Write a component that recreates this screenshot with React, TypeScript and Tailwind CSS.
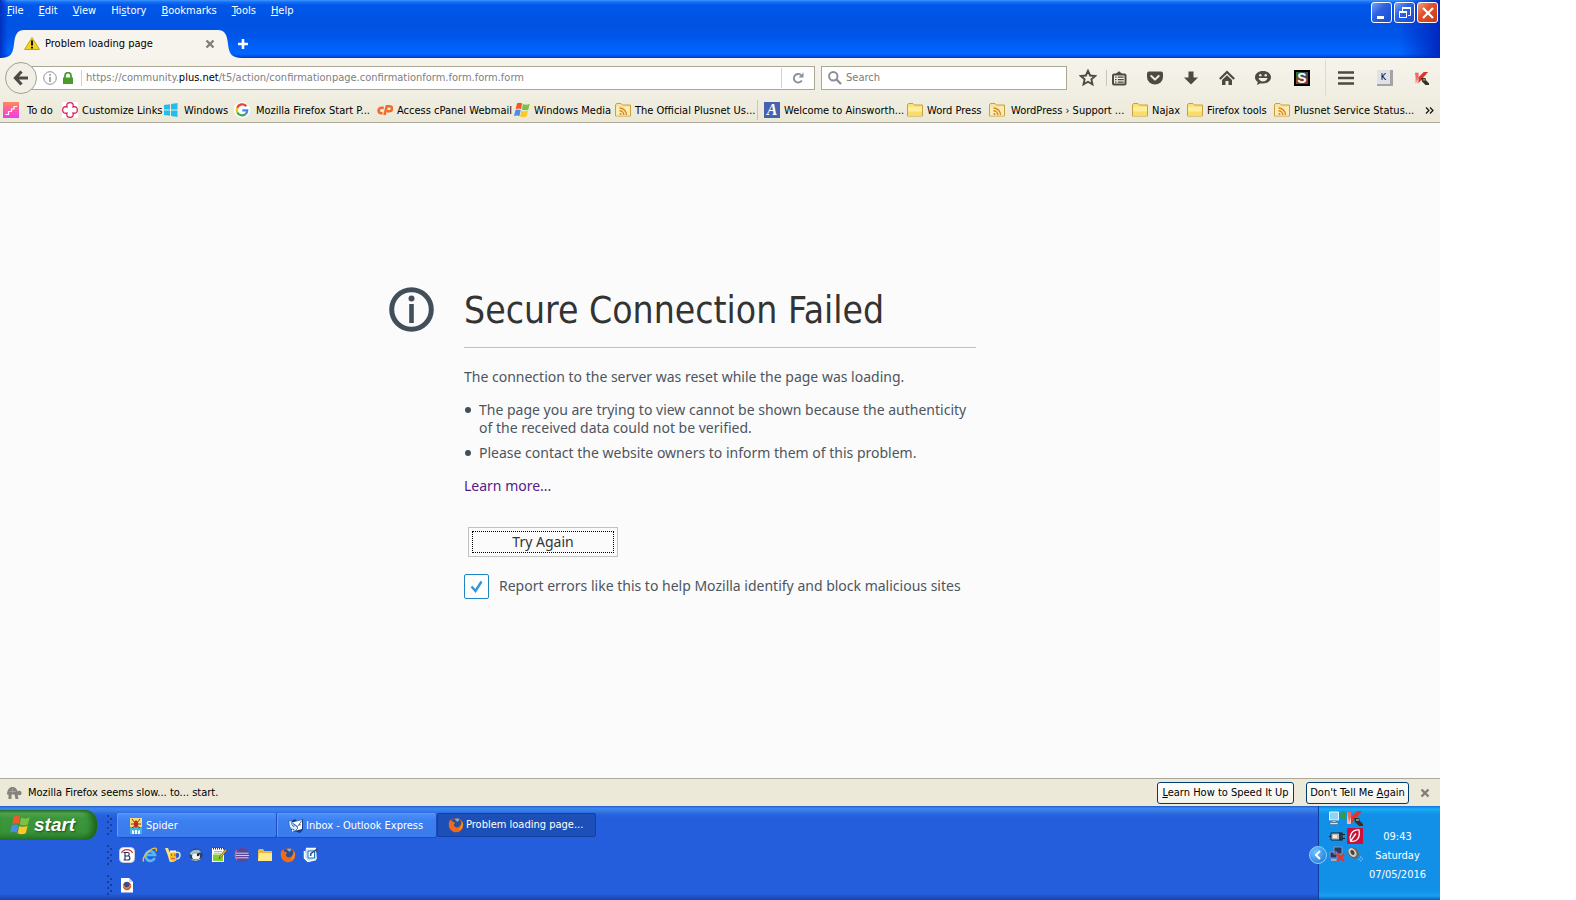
import React from "react";

type Kids = { children?: React.ReactNode };

function Svg({ children, size = 16, box = 16, className = "" }: Kids & { size?: number; box?: number; className?: string }) {
  return (
    <svg width={size} height={size} viewBox={`0 0 ${box} ${box}`} fill="none" aria-hidden="true" className={`shrink-0 ${className}`}>
      {children}
    </svg>
  );
}

/* ---------- Bookmark icons ---------- */

const TodoIcon = () => (
  <Svg>
    <defs>
      <linearGradient id="todo" x1="0" y1="0" x2="0" y2="1">
        <stop offset="0" stopColor="#ff8a5c" />
        <stop offset="0.5" stopColor="#ff5aa8" />
        <stop offset="1" stopColor="#f03cf0" />
      </linearGradient>
    </defs>
    <path d="M0 0h16v16H0z" fill="url(#todo)" />
    <path d="M2.500 12.500h3v-3h3v-2.500h2.500V4.500h3" stroke="#fff" strokeWidth="1.200" />
  </Svg>
);

const LinksIcon = () => (
  <Svg>
    <path d="M0 0h16v16H0z" fill="#fff" />
    <path d="M5 5C4 1.500 6 .7 8 .7s4 .8 3 4.300c3.500-1 4.300 1 4.300 3s-.8 4-4.300 3c1 3.500-1 4.300-3 4.300s-4-.8-3-4.300C1.500 12 .7 10 .7 8s.8-4 4.300-3z" stroke="#d0215f" strokeWidth="1.300" />
  </Svg>
);

const Win8Icon = () => (
  <Svg>
    <path d="M0 3 6 2.200v5.300H0zM7 2 13.500 1v6.500H7zM0 8.500h6v5.300L0 13zM7 8.500h6.500V15L7 14z" fill="#22bdf0" />
  </Svg>
);

const GoogleIcon = () => (
  <Svg>
    <circle cx="8" cy="8" r="8" fill="#fff" />
    <path d="M12.300 4.200A5.300 5.300 0 0 0 3.300 5.800" stroke="#ea4335" strokeWidth="2.200" />
    <path d="M3.300 5.800a5.300 5.300 0 0 0 0 4.600" stroke="#fbbc05" strokeWidth="2.200" />
    <path d="M3.300 10.400a5.300 5.300 0 0 0 8.200 1.700" stroke="#34a853" strokeWidth="2.200" />
    <path d="M11.500 12.100A5 5 0 0 0 13.300 8.300H8.300" stroke="#4285f4" strokeWidth="2.200" />
  </Svg>
);

const CpanelIcon = () => (
  <Svg>
    <path d="M6.800 5.800H4.300a2.700 2.700 0 0 0 0 5.400h1.300" stroke="#f4692d" strokeWidth="2.600" />
    <path d="M7.500 13 9.800 4.200h2.700a2.400 2.400 0 0 1 0 5H10" stroke="#f4692d" strokeWidth="2.600" />
  </Svg>
);

const FlagIcon = ({ size = 16 }: { size?: number }) => (
  <Svg size={size}>
    <path d="M3 1.300C5 .2 6.800.6 8.200 1.500L6.900 7.200C5.200 6.300 3.600 6.300 1.600 7.400z" fill="#ee5a2a" />
    <path d="M9 2c2 1 4.200 1 6.800-.3L14.300 7.500c-2.200 1.200-4.400 1-6.600.1z" fill="#7cc142" />
    <path d="M1.400 8.300c2-1 3.700-1 5.300 0l-1.400 5.900C3.700 13.200 2 13.200 0 14.300z" fill="#4a8fe6" />
    <path d="M7.400 8.700c2.200 1 4.400 1 6.700-.1l-1.500 6c-2.200 1-4.400 1-6.500 0z" fill="#fbc72c" />
  </Svg>
);

const FolderIcon = ({ feed = false }: { feed?: boolean }) => (
  <Svg>
    <path d="M.5 14V3l1-1.500H6L7.500 3h8v11z" fill={feed ? "#f8e3a0" : "#fbe27c"} stroke="#c9a03c" />
    <path d="M1 5h14v8.500H1z" fill={feed ? "#fbecb8" : "#fdee9c"} />
    {feed ? (
      <>
        <circle cx="5.500" cy="12" r="1.100" fill="#d98a1c" />
        <path d="M4.500 8.700a4.300 4.300 0 0 1 4.300 4.200M4.500 5.900a7 7 0 0 1 7 7" stroke="#d98a1c" strokeWidth="1.500" />
      </>
    ) : (
      <path d="M1 9.500h14v4H1z" fill="#f9dc6c" />
    )}
  </Svg>
);

const AIcon = () => (
  <span className="flex size-4 shrink-0 items-center justify-center bg-[#4563ae] font-['Liberation_Serif',serif] text-[16px] leading-4 font-bold text-white italic">A</span>
);

/* ---------- Toolbar icons ---------- */

const ink = "#4b4a43";

const StarIcon = () => (
  <Svg size={18} box={18}>
    <path d="m9 1.800 2.100 4.700 5.100.5-3.800 3.400 1.100 5L9 12.800l-4.500 2.600 1.100-5L1.800 7l5.100-.5z" stroke={ink} strokeWidth="1.900" />
  </Svg>
);
const ListIcon = () => (
  <Svg>
    <rect x="2" y="4.500" width="12.500" height="10" rx="1" stroke={ink} strokeWidth="2" />
    <path d="M4.500 4.500 6 2.500h.7L8 1l1.300 1.500h.7l1.500 2z" fill={ink} />
    <path d="M4 7.200h1.500M6.700 7.200h6M4 9.700h1.500M6.700 9.700h6M4 12.200h1.500M6.700 12.200h6" stroke={ink} strokeWidth="1.300" />
  </Svg>
);
const PocketIcon = () => (
  <Svg>
    <path d="M2 1.500h12Q16 1.500 16 3.500V7a8 7.500 0 0 1-16 0V3.500Q0 1.500 2 1.500z" fill={ink} />
    <path d="m4.300 6 3.700 3.600L11.700 6" stroke="#f1efe3" strokeWidth="2" strokeLinecap="round" strokeLinejoin="round" />
  </Svg>
);
const DownIcon = () => (
  <Svg>
    <path d="M5.500 1.500h5v6H15L8 14.500 1 7.500h4.500z" fill={ink} />
  </Svg>
);
const HomeIcon = () => (
  <Svg>
    <path d="m.8 9 7.200-7L15.200 9" stroke={ink} strokeWidth="2.200" />
    <path d="m8 5.200 5 4.800V15H9.500v-4h-3v4H3v-5z" fill={ink} />
  </Svg>
);
const ChatIcon = () => (
  <Svg>
    <path d="M8 1c4.500 0 8 2.700 8 6.300s-3.500 6.200-8 6.200c-.8 0-1.600-.1-2.300-.3L2 15l.8-3C1 10.900 0 9.200 0 7.300 0 3.700 3.500 1 8 1z" fill={ink} />
    <circle cx="5.300" cy="5.200" r="1.200" fill="#f1efe3" />
    <circle cx="10.700" cy="5.200" r="1.200" fill="#f1efe3" />
    <path d="M3.500 8h9c-.5 2.300-2.300 3.400-4.500 3.400S4 10.300 3.500 8z" fill="#f1efe3" />
  </Svg>
);
const StylishIcon = () => (
  <span className="flex size-4 items-center justify-center border-2 border-black bg-[conic-gradient(#3a4a5f_0_25%,#8c2f28_0_50%,#8a4a28_0_75%,#3c6630_0)] font-['Liberation_Sans',sans-serif] text-[14px] leading-none font-bold text-white">S</span>
);
const MenuIcon = () => (
  <Svg>
    <path d="M0 2.500h16M0 8h16M0 13.500h16" stroke={ink} strokeWidth="2.600" />
  </Svg>
);
const KeyIcon = () => (
  <span className="flex size-4 items-center justify-center border-r-3 border-b-2 border-[#a3a3a8] bg-[#e2e2e6] text-[9px] leading-none text-black">K</span>
);
const KasperskyIcon = ({ size = 14 }: { size?: number }) => (
  <Svg size={size}>
    <path d="M0 2h4v12H0z" fill="#f7b9b3" />
    <path d="M4 2v5l6-6h5L4 14z" fill="#e2342d" />
    <path d="M0 2h4v5L2 12z" fill="#ec6a62" />
    <path d="M7 8h5l1 3 3 3v2h-4l-4-4z" fill="#33312e" />
    <path d="M9 9h3v2H9z" fill="#8a8a86" />
  </Svg>
);

/* ---------- Desktop icons ---------- */

const FirefoxIcon = ({ size = 16 }: { size?: number }) => (
  <Svg size={size}>
    <circle cx="8" cy="8" r="7" fill="#e65a17" />
    <circle cx="8" cy="6.500" r="5.300" fill="#2a4f93" />
    <path d="M6.500 2c2-1 4-.6 5 .4L9.500 5z" fill="#6db7e8" />
    <path d="M1 5 2.500 2.500 4 4.500c1.500 0 2.500.6 3 1.500L5.800 7.500C6 10 8.500 11 10.500 10c2-1 3-3.500 2.800-6.500C16.500 7 15.500 12.500 11.500 14.500 6 17-.5 12.500 1 5z" fill="#ee6a1c" />
    <path d="M14 4.500c1.500 4-.5 7.500-3.500 9 3-2.500 4-5 3.500-9z" fill="#fdd03a" />
  </Svg>
);
const SpiderIcon = () => (
  <Svg>
    <path d="M2 0h12v16H2z" fill="#f5dc7a" />
    <path d="M2 9h12v7H2z" fill="#3fb4e4" />
    <path d="m4 1 3 4m5-4L9 5M3 6h10M4 10l4-3m4 3L8 7" stroke="#7c1c10" strokeWidth=".9" />
    <ellipse cx="8" cy="6" rx="2" ry="3.500" fill="#c22a1c" />
    <path d="M4 12v4h2v-3zm8 0v4h-2v-3zM7 12h2v4H7z" fill="#fff" />
  </Svg>
);
const OutlookIcon = () => (
  <Svg>
    <path d="m3 3 4-2 2 2 6-2v11l-3 3-9-3z" fill="#173f86" />
    <path d="m4 4.500 10-2.500v9l-10 2.500z" fill="#fff" />
    <path d="m4.500 5 5 3.500L14 2.500" stroke="#3b6fb0" />
    <path d="M1 2.500c-.5 6 1 9 5 9v2.500l4-4-4-4v2.500C4 8 3.500 6 4 3z" fill="#d8efff" stroke="#1d5fb3" strokeWidth=".8" />
    <path d="M11 6h1.500v1.500H11z" fill="#d33" />
  </Svg>
);
const BIcon = () => (
  <Svg>
    <rect x=".5" y=".5" width="15" height="15" rx="4" fill="#fff" stroke="#ccd" />
    <path d="M2.500 6c1.500-4.500 9.500-4.500 11 0" stroke="#d23b3b" strokeWidth="1.300" />
    <path d="M6 6v7M4.500 5.500h4c2.300 0 2.300 3.500 0 3.500H6.500h2.500c2.500 0 2.500 4 0 4H4.500" stroke="#222b55" strokeWidth="1.100" />
  </Svg>
);
const IeIcon = () => (
  <Svg>
    <path d="M12.700 11A4.800 4.800 0 1 1 13 8H5" stroke="#58b7f2" strokeWidth="2.700" />
    <path d="M2 14.500C-1.500 13 6 3 11.500 1.300c3-.8 3.500 1 2.500 3" stroke="#f5c52c" strokeWidth="1.300" />
  </Svg>
);
const PotIcon = () => (
  <Svg>
    <path d="M0 1h3l1.500 4h6l1 8q-3 3-7 1.500L3 9z" fill="#fbe08a" />
    <path d="M5 5h6v8q-3 2-6 0z" fill="#f3bd27" />
    <path d="M11 5.500q4-1 4 2.500T11.500 12" stroke="#e9e3c8" strokeWidth="1.500" />
    <path d="M6 7h1v2H6zm3.500 0h1v2h-1zM6.500 11h3v1h-3z" fill="#d0502a" />
    <path d="M5 3.500h6v2H5z" fill="#fff6cf" />
  </Svg>
);
const ThunderbirdIcon = () => (
  <Svg>
    <circle cx="8" cy="8" r="6.500" fill="#27445e" />
    <path d="M1.500 7C3 3 7 2 11 3l2.500 2.500-4 .5-5 2.500z" fill="#9bb9cf" />
    <ellipse cx="8" cy="9.500" rx="4" ry="3" fill="#f4f4f4" />
    <circle cx="10" cy="8" r="1.200" fill="#223" />
    <path d="M3.500 12.500q5 2.500 9-.5" stroke="#b9cbd8" />
  </Svg>
);
const NotepadIcon = () => (
  <Svg>
    <path d="M1 1h12v14H1z" fill="#fff" />
    <path d="M2 7.500h10v6.500H2z" fill="#7fd02a" />
    <path d="M2 1.500h11" stroke="#333" strokeDasharray="1 1" strokeWidth="2" />
    <path d="M3 4.500h8M3 6.300h7" stroke="#99a" strokeWidth=".8" />
    <path d="m8 12 1-3 5.500-7L16 3.200 10.500 10z" fill="#e9b934" stroke="#5a3b12" strokeWidth=".6" />
  </Svg>
);
const EclipseIcon = () => (
  <Svg>
    <circle cx="8" cy="8" r="7.200" fill="#5a4796" />
    <path d="M1.500 6.200h13M1 8.500h14M1.500 10.800h13" stroke="#d9cbe6" />
    <path d="M3 3.300A7 7 0 0 0 3 12.700" stroke="#c86a94" strokeWidth="1.300" />
  </Svg>
);
const YellowFolderIcon = () => (
  <Svg>
    <path d="M1 14V3.500L2 2h4l1.500 2H15v10z" fill="#e8b93c" />
    <path d="M1 14 2 6h13v8z" fill="#ffe98f" />
    <path d="M0 14.500h15.500" stroke="#7a5a12" />
  </Svg>
);
const DesktopIcon = () => (
  <Svg>
    <path d="M3 1h10l1 11-9 3-4-4z" fill="#bfe3fa" />
    <path d="M3 1.500h10M1.500 4v7L5 14.500l8-2" stroke="#fff" strokeWidth="1.500" />
    <path d="M5 4h6.500v7H5z" fill="#fff" stroke="#2a71b8" />
    <path d="m7.500 9 .5-2.500L14.500 2" stroke="#1d4d86" strokeWidth="1.500" />
    <path d="m12.500 3 3 1-2 1.500z" fill="#8a3b1a" />
  </Svg>
);
const DocFirefoxIcon = () => (
  <Svg>
    <path d="M2 1h8l4 4v10.500H2z" fill="#fff" />
    <path d="M10 1v4h4z" fill="#cfd6e2" />
    <circle cx="8" cy="9" r="4.200" fill="#e2581a" />
    <circle cx="7.800" cy="7.800" r="2.800" fill="#2c4f98" />
    <path d="M4.500 8c.5 4 5 4 7 0" stroke="#f7a52a" />
  </Svg>
);
const WifiIcon = () => (
  <Svg>
    <path d="M.5 2h9v8h-9z" fill="#8ed4f8" stroke="#e6f4fb" />
    <path d="M3 10.500h4V12H3zM1 12.500h8v2H1z" fill="#d8e6ee" stroke="#345" strokeWidth=".4" />
    <path d="M10.500 3.500q1.500 2 0 4M12.500 2q2.500 3.500 0 7M14.300 1q3 4.500 0 9" stroke="#2f9c4a" strokeWidth="1.400" />
  </Svg>
);
const PlugIcon = () => (
  <Svg>
    <path d="M2 5h9v7H2z" fill="#b9b9b9" stroke="#222" />
    <path d="M0 8.500h2M11 5v7h2V5zM13 6.500h3M13 10.500h3" stroke="#1b1b1b" strokeWidth="1.200" />
    <path d="M4 7h4v3H4z" fill="#eee" />
  </Svg>
);
const RedIcon = () => (
  <Svg>
    <path d="M0 0h16v16H0z" fill="#cc1038" />
    <path d="M12 2C4 1.500 2 9 3.500 13c6 1.500 10-3 8.500-11zM3.500 13 9 5.500" stroke="#fff" strokeWidth="1.300" />
  </Svg>
);
const NetIcon = () => (
  <Svg>
    <path d="M5 1h8v7H5zM1 6h7v6H1z" fill="#2a3560" stroke="#8b95bd" />
    <path d="M2 13h6v2H2z" fill="#aab" />
    <path d="m8 8 7 7m0-7-7 7" stroke="#e5352b" strokeWidth="2.200" />
  </Svg>
);
const SpeakerIcon = () => (
  <Svg>
    <ellipse cx="6.500" cy="7" rx="5" ry="6" transform="rotate(-35 6.500 7)" fill="#66655e" />
    <ellipse cx="5.500" cy="6.500" rx="3.500" ry="5" transform="rotate(-35 5.500 6.500)" fill="#cfccbc" />
    <ellipse cx="5.500" cy="6.500" rx="1.800" ry="2.600" transform="rotate(-35 5.500 6.500)" fill="#444" />
    <path d="M11 14q3-1 3-4M13 15.500q3-1.500 3-4" stroke="#6cb6ff" />
  </Svg>
);

const Cross = () => (
  <Svg size={10} box={10}>
    <path d="m1.500 1.500 7 7m0-7-7 7" stroke="#7f7f78" strokeWidth="2.400" />
  </Svg>
);

/* ---------- Data ---------- */

const menus = ["File", "Edit", "View", "History", "Bookmarks", "Tools", "Help"];
const accelerator: Record<string, number> = { History: 2 };

const bookmarks = [
  { label: "To do", icon: <TodoIcon />, cls: "w-[59px] gap-2" },
  { label: "Customize Links", icon: <LinksIcon />, cls: "w-[102px] gap-1" },
  { label: "Windows", icon: <Win8Icon />, cls: "w-[70px] gap-1" },
  { label: "Mozilla Firefox Start P...", icon: <GoogleIcon />, cls: "w-[143px] gap-1.5" },
  { label: "Access cPanel Webmail", icon: <CpanelIcon />, cls: "w-[137px] gap-1" },
  { label: "Windows Media", icon: <FlagIcon />, cls: "w-[101px] gap-1" },
  { label: "The Official Plusnet Us...", icon: <FolderIcon feed />, cls: "w-[142px] gap-1" },
  { label: "Welcome to Ainsworth...", icon: <AIcon />, cls: "w-[150px] gap-1 border-l border-[#c9c6b4] pl-1.5" },
  { label: "Word Press", icon: <FolderIcon />, cls: "w-[82px] gap-1" },
  { label: "WordPress › Support ...", icon: <FolderIcon feed />, cls: "w-[143px] gap-1.5" },
  { label: "Najax", icon: <FolderIcon />, cls: "w-[55px] gap-1" },
  { label: "Firefox tools", icon: <FolderIcon />, cls: "w-[87px] gap-1" },
  { label: "Plusnet Service Status...", icon: <FolderIcon feed />, cls: "w-[142px] gap-1" },
];

const quickLaunch = [
  { name: "B", icon: <BIcon /> },
  { name: "Internet Explorer", icon: <IeIcon /> },
  { name: "Teapot", icon: <PotIcon /> },
  { name: "Thunderbird", icon: <ThunderbirdIcon /> },
  { name: "Notepad", icon: <NotepadIcon /> },
  { name: "Eclipse", icon: <EclipseIcon /> },
  { name: "Folder", icon: <YellowFolderIcon /> },
  { name: "Firefox", icon: <FirefoxIcon /> },
  { name: "Show desktop", icon: <DesktopIcon /> },
];

/* ---------- Parts ---------- */

function ToolButton({ name, className = "w-9", children }: Kids & { name: string; className?: string }) {
  return (
    <button type="button" aria-label={name} className={`flex h-8 shrink-0 items-center justify-center ${className}`}>
      {children}
    </button>
  );
}

function TitleBar() {
  return (
    <header className="flex h-[58px] justify-between bg-[linear-gradient(to_right,#0030c0_0,#0040d000_8px,#0040d000_calc(100%-40px),#0028c0_100%),linear-gradient(to_bottom,#3d95ff_0,#1670f5_2px,#0058ea_5px,#0053e2_20px,#0055e8_36px,#0062fb_48px,#0066ff_54px,#0046d8_57px,#0036b8_58px)]">
      <div className="flex flex-col justify-between">
        <nav className="flex h-[22px] items-center gap-[15px] pl-[7px] text-white">
          {menus.map((m) => {
            const i = accelerator[m] ?? 0;
            return (
              <button key={m} type="button" className="whitespace-nowrap">
                {m.slice(0, i)}
                <span className="underline">{m[i]}</span>
                {m.slice(i + 1)}
              </button>
            );
          })}
        </nav>
        <div className="flex h-7 items-center">
          <svg width="24" height="28" viewBox="0 0 24 28" aria-hidden="true" className="shrink-0">
            <path d="M0 28c11 0 13-5 14-14S17 0 24 0v28z" fill="#f6f4ec" />
          </svg>
          <div className="flex h-7 w-[194px] items-center bg-[#f6f4ec]">
            <Svg className="mr-[5px]">
              <path d="M8 1.500 15.500 13.500H.5z" fill="#f5d21f" stroke="#c8a415" />
              <path d="M8 4.500v5M8 10.800v1.700" stroke="#111" strokeWidth="2" />
            </Svg>
            <span className="flex-1 whitespace-nowrap text-black">Problem loading page</span>
            <button type="button" aria-label="Close tab" className="mr-[3px]"><Cross /></button>
          </div>
          <svg width="24" height="28" viewBox="0 0 24 28" aria-hidden="true" className="shrink-0">
            <path d="M24 28c-11 0-13-5-14-14S7 0 0 0v28z" fill="#f6f4ec" />
          </svg>
          <button type="button" aria-label="New tab" className="-ml-1">
            <Svg size={10} box={10}>
              <path d="M5 0v10M0 5h10" stroke="#fff" strokeWidth="2.600" />
            </Svg>
          </button>
        </div>
      </div>
      <div className="flex gap-0.5 pt-0.5 pr-0.5">
        <button type="button" aria-label="Minimize" className="flex size-[21px] items-center justify-center rounded-[3px] border border-white bg-[linear-gradient(135deg,#7aa2f5,#2c62e4_40%,#1d4bd0)]">
          <Svg><path d="M3 11h7v3H3z" fill="#fff" /></Svg>
        </button>
        <button type="button" aria-label="Restore" className="flex size-[21px] items-center justify-center rounded-[3px] border border-white bg-[linear-gradient(135deg,#7aa2f5,#2c62e4_40%,#1d4bd0)]">
          <Svg>
            <path d="M5.500 6V3.500h8v7H11" stroke="#fff" /><path d="M5 3h9" stroke="#fff" strokeWidth="2" />
            <path d="M2.500 6.500h7v6h-7z" stroke="#fff" /><path d="M2 7h8" stroke="#fff" strokeWidth="2" />
          </Svg>
        </button>
        <button type="button" aria-label="Close" className="flex size-[21px] items-center justify-center rounded-[3px] border border-white bg-[linear-gradient(135deg,#f0a08c,#e2512c_40%,#c83a14)]">
          <Svg><path d="m3 3 10 10M13 3 3 13" stroke="#fff" strokeWidth="2.200" /></Svg>
        </button>
      </div>
    </header>
  );
}

function NavBar() {
  return (
    <div className="flex h-10 items-center bg-[linear-gradient(to_bottom,#f6f3ec,#f0eee1)] pl-[5px]">
      <button type="button" aria-label="Back" className="relative z-10 flex size-8 shrink-0 items-center justify-center rounded-full border border-[#a3a18c] bg-[#f2f0e6]">
        <Svg><path d="M8.500 1.500 2.500 8l6 6.500M3 8h12" stroke={ink} strokeWidth="3.200" /></Svg>
      </button>
      <div className="-ml-2 flex h-6 flex-1 items-center border border-[#aaa894] bg-white pl-[13px]">
        <Svg size={14} box={14}>
          <circle cx="7" cy="7" r="6.300" stroke="#8f8f8f" />
          <path d="M7 3v1.800M7 6v5" stroke="#8f8f8f" strokeWidth="1.500" />
        </Svg>
        <Svg size={12} box={12} className="ml-[5px]">
          <path d="M1 5.500h10V12H1z" fill="#4b9a2c" />
          <path d="M3 6V3.700a3 3 0 0 1 6 0V6" stroke="#4b9a2c" strokeWidth="1.800" />
        </Svg>
        <span className="mr-1 ml-[7px] h-4 w-px bg-[#d2d2d2]" />
        <span className="min-w-0 flex-1 truncate text-[#808080]">
          https://community.<span className="text-black">plus.net</span>/t5/action/confirmationpage.confirmationform.form.form.form
        </span>
        <span className="h-5 w-px bg-[#d2d2d2]" />
        <button type="button" aria-label="Reload" className="flex w-8 justify-center">
          <Svg size={12} box={12}>
            <path d="M9.800 8.500A4.300 4.300 0 1 1 9 3" stroke="#8b8f9c" strokeWidth="1.900" />
            <path d="M11.500.5v5h-5z" fill="#8b8f9c" />
          </Svg>
        </button>
      </div>
      <label className="ml-[6px] flex h-6 w-[246px] shrink-0 items-center border border-[#aaa894] bg-white pl-1.5">
        <Svg size={14} box={14}>
          <circle cx="5.300" cy="5.300" r="4.200" stroke="#8e8e96" strokeWidth="2" />
          <path d="m8.500 8.500 4.500 4.500" stroke="#8e8e96" strokeWidth="2.400" />
        </Svg>
        <input aria-label="Search" placeholder="Search" className="ml-1 w-full min-w-0 bg-transparent outline-none placeholder:text-[#7a7a7a]" />
      </label>
      <div className="flex shrink-0 items-center pl-[3px]">
        <ToolButton name="Bookmark this page"><StarIcon /></ToolButton>
        <span className="h-4 w-px bg-[#c9c7b8]" />
        <ToolButton name="Bookmarks list" className="mr-1.5 w-6"><ListIcon /></ToolButton>
        <ToolButton name="Pocket"><PocketIcon /></ToolButton>
        <ToolButton name="Downloads"><DownIcon /></ToolButton>
        <ToolButton name="Home"><HomeIcon /></ToolButton>
        <ToolButton name="Chat"><ChatIcon /></ToolButton>
        <ToolButton name="Stylish" className="w-[42px]"><StylishIcon /></ToolButton>
        <span className="mx-0.5 h-9 w-px bg-[#dddbcd]" />
        <ToolButton name="Menu" className="mr-[3px] w-9"><MenuIcon /></ToolButton>
        <ToolButton name="Keyboard" className="mr-px w-9"><KeyIcon /></ToolButton>
        <ToolButton name="Kaspersky"><KasperskyIcon /></ToolButton>
      </div>
    </div>
  );
}

function BookmarksBar() {
  return (
    <nav className="flex h-[25px] items-center border-b border-[#aca899] bg-[linear-gradient(to_bottom,#f0eee1,#ebe8d7)] pl-[3px] text-black">
      {bookmarks.map((b) => (
        <a key={b.label} href="#" className={`flex h-5 shrink-0 items-center whitespace-nowrap ${b.cls}`}>
          {b.icon}
          <span className="pt-0.5">{b.label}</span>
        </a>
      ))}
      <button type="button" aria-label="More bookmarks" className="ml-auto pr-1.5">
        <Svg size={9} box={9}>
          <path d="m1 1.500 3 3-3 3M5 1.500l3 3-3 3" stroke="#111" strokeWidth="1.200" />
        </Svg>
      </button>
    </nav>
  );
}

function ErrorPage() {
  return (
    <main className="flex flex-1 flex-col items-center justify-center bg-[#fbfbfb] pb-4 font-['Noto_Sans','DejaVu_Sans',sans-serif] text-[14px] leading-[18px] text-[#4d5560]">
      <div className="flex gap-[30px] pr-[75px]">
        <Svg size={45} box={45}>
          <circle cx="22.500" cy="22.500" r="19.800" stroke="#424f5a" strokeWidth="5" />
          <circle cx="22.500" cy="11.500" r="3" fill="#424f5a" />
          <path d="M22.500 17v19" stroke="#424f5a" strokeWidth="4.600" />
        </Svg>
        <div className="w-[512px]">
          <h1 className="border-b border-[#c1c1c1] pb-3 font-['DejaVu_Sans_Condensed','DejaVu_Sans',sans-serif] text-[37px] leading-[48px] whitespace-nowrap text-[#333]">Secure Connection Failed</h1>
          <p className="mt-5">The connection to the server was reset while the page was loading.</p>
          <ul className="mt-[15px] space-y-[7px]">
            {[
              "The page you are trying to view cannot be shown because the authenticity of the received data could not be verified.",
              "Please contact the website owners to inform them of this problem.",
            ].map((t) => (
              <li key={t} className="flex gap-2">
                <span className="mt-1.5 ml-px size-1.5 shrink-0 rounded-full bg-[#424f5a]" />
                <span>{t}</span>
              </li>
            ))}
          </ul>
          <a href="#" className="mt-[15px] block text-[#551a8b]">Learn more...</a>
          <button type="button" className="mt-8 ml-1 block h-[30px] w-[150px] border border-[#c1c1c1] bg-[#fbfbfb] p-[3px] text-[#333]">
            <span className="flex h-full items-center justify-center border border-dotted border-black">Try Again</span>
          </button>
          <label className="mt-[17px] flex items-center gap-2.5 whitespace-nowrap">
            <span className="grid">
              <input type="checkbox" defaultChecked className="col-start-1 row-start-1 size-[25px] appearance-none rounded-[2px] border border-[#1f86c4] bg-white" />
              <Svg size={25} box={25} className="pointer-events-none col-start-1 row-start-1">
                <path d="m7.500 12.500 4 4.500 6-9.500" stroke="#3296d2" strokeWidth="2.400" />
              </Svg>
            </span>
            Report errors like this to help Mozilla identify and block malicious sites
          </label>
        </div>
      </div>
    </main>
  );
}

function NoticeBar() {
  const button = "h-[22px] rounded-[3px] border border-[#003c74] bg-[linear-gradient(to_bottom,#fff,#f3f2ea)] text-center whitespace-nowrap text-black";
  return (
    <div className="flex h-7 items-center border-t border-[#aca899] bg-[#ece9d8] pl-1.5 text-black">
      <Svg>
        <path d="M1 9.500C1 4.500 3.500 2 6.500 2S12 4.500 12 9.500z" fill="#83837c" />
        <circle cx="13.300" cy="8" r="2.300" fill="#83837c" />
        <path d="M2.500 9h3v5h-3zm6 0h3l1 5h-3z" fill="#83837c" />
        <path d="M3 6.500h7M6.500 3v5" stroke="#aaa99f" strokeWidth=".8" />
      </Svg>
      <span className="ml-1.5 flex-1 whitespace-nowrap">Mozilla Firefox seems slow... to... start.</span>
      <button type="button" className={`${button} w-[137px]`}><span className="underline">L</span>earn How to Speed It Up</button>
      <button type="button" className={`${button} ml-3 w-[103px]`}>Don't Tell Me <span className="underline">A</span>gain</button>
      <button type="button" aria-label="Close notice" className="mr-2.5 ml-[11px]"><Cross /></button>
    </div>
  );
}

const Grip = () => (
  <Svg size={20} box={20}>
    <path d="M6 0v20" stroke="#153fa0" strokeWidth="2" strokeDasharray="2 4" />
    <path d="M9 3v17" stroke="#153fa0" strokeWidth="2" strokeDasharray="2 4" />
  </Svg>
);

function Task({ icon, label, active = false }: { icon: React.ReactNode; label: string; active?: boolean }) {
  return (
    <button
      type="button"
      className={`flex h-6 w-[159px] items-center gap-0.5 rounded-[2px] pl-2.5 text-left whitespace-nowrap text-white ${
        active
          ? "border border-[#12409c] bg-[#1c50b8]"
          : "border-t border-l border-[#5c9cff] bg-[linear-gradient(to_bottom,#4a8dfb,#3c7ff0_30%,#3a7bee)] shadow-[1px_1px_0_#1c4dba]"
      }`}
    >
      {icon}
      {label}
    </button>
  );
}

function TaskBar() {
  return (
    <footer className="flex h-[94px] bg-[linear-gradient(to_bottom,#1f55c4_0,#3b86ee_2px,#3a82ea_4px,#2a66dc_8px,#245edc_12px,#245edc_88px,#1941a5_94px)]">
      <div className="w-[102px] shrink-0 pt-1">
        <button type="button" className="flex h-[30px] w-[97px] items-center gap-1 rounded-r-[12px] bg-[linear-gradient(to_bottom,#2c7a2c,#58ab58_3px,#3c973c_8px,#389438_22px,#2a7a2a)] pl-2.5 font-['Liberation_Sans',sans-serif] text-[19px] leading-6 font-bold text-white italic shadow-[inset_-5px_0_6px_#1d641d] [text-shadow:1px_1px_2px_#1d4a1d]">
          <FlagIcon size={20} />
          <span>start</span>
        </button>
      </div>
      <div className="flex min-w-0 flex-1 flex-col pt-1">
        <div className="flex h-[30px] items-center">
          <Grip />
          <div className="-ml-[5px] flex gap-px">
            <Task icon={<SpiderIcon />} label="Spider" />
            <Task icon={<OutlookIcon />} label="Inbox - Outlook Express" />
            <Task icon={<FirefoxIcon />} label="Problem loading page..." active />
          </div>
        </div>
        <div className="flex h-[30px] items-center">
          <Grip />
          <div className="-ml-[3px] flex gap-[7px]">
            {quickLaunch.map((q) => (
              <button key={q.name} type="button" aria-label={q.name}>{q.icon}</button>
            ))}
          </div>
        </div>
        <div className="flex h-[30px] items-center">
          <Grip />
          <button type="button" aria-label="Firefox document" className="-ml-[3px]"><DocFirefoxIcon /></button>
        </div>
      </div>
      <div className="relative flex w-[122px] shrink-0 border-l border-[#0c3f9c] bg-[linear-gradient(to_bottom,#1a70d8_0,#16b0f5_3px,#1290e8_8px,#1290e8_84px,#17a0f2_90px,#0d5cb8_94px)]">
        <button type="button" aria-label="Show hidden icons" className="absolute top-10 -left-[10px] flex size-[18px] items-center justify-center rounded-full border border-[#8fd0fb] bg-[radial-gradient(circle_at_35%_30%,#6fc4ff,#1272d8)]">
          <Svg size={10} box={10}><path d="M7 1 3 5l4 4" stroke="#fff" strokeWidth="2" /></Svg>
        </button>
        <div className="ml-2.5 grid w-[34px] auto-rows-[18px] grid-cols-2 content-start gap-x-0.5 pt-1">
          <WifiIcon />
          <KasperskyIcon size={16} />
          <PlugIcon />
          <RedIcon />
          <NetIcon />
          <SpeakerIcon />
        </div>
        <div className="flex-1 pt-[21px] pr-2 text-center leading-[19px] text-white">
          <div>09:43</div>
          <div>Saturday</div>
          <div>07/05/2016</div>
        </div>
      </div>
    </footer>
  );
}

export default function App() {
  return (
    <div className="flex min-h-screen bg-white pr-34 font-['DejaVu_Sans_Condensed','DejaVu_Sans',sans-serif] text-[11px] leading-4">
      <div className="flex min-w-0 flex-1 flex-col overflow-hidden">
        <TitleBar />
        <NavBar />
        <BookmarksBar />
        <ErrorPage />
        <NoticeBar />
        <TaskBar />
      </div>
    </div>
  );
}
